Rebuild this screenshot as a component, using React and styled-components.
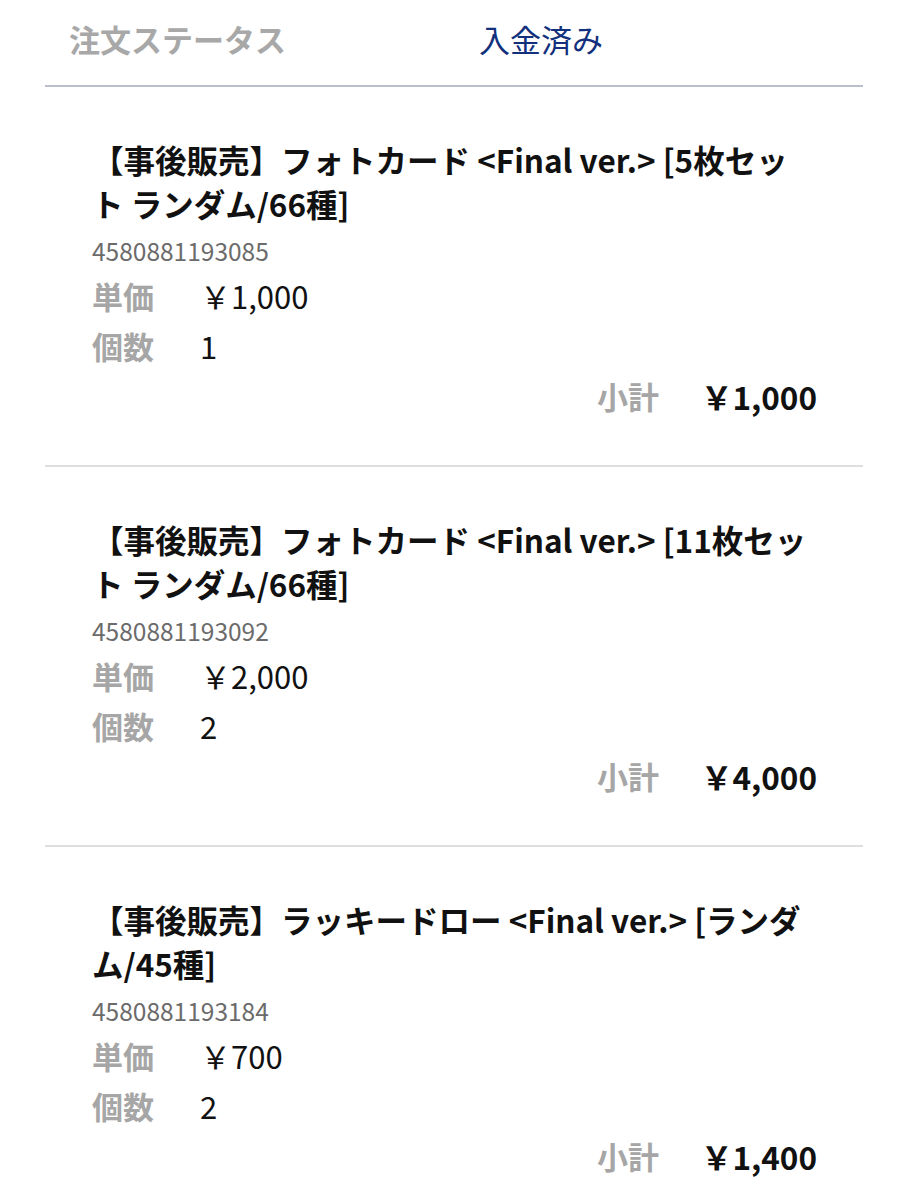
import React from "react";
import styled, { createGlobalStyle } from "styled-components";

const GlobalStyle = createGlobalStyle`
  html, body {
    margin: 0;
    padding: 0;
    background: #fff;
  }
  body {
    font-family: "Noto Sans CJK JP", "Noto Sans", sans-serif;
    color: #111;
  }
`;

const items = [
  {
    name: "【事後販売】フォトカード <Final ver.> [5枚セット ランダム/66種]",
    code: "4580881193085",
    price: "￥1,000",
    qty: "1",
    subtotal: "￥1,000",
  },
  {
    name: "【事後販売】フォトカード <Final ver.> [11枚セット ランダム/66種]",
    code: "4580881193092",
    price: "￥2,000",
    qty: "2",
    subtotal: "￥4,000",
  },
  {
    name: "【事後販売】ラッキードロー <Final ver.> [ランダム/45種]",
    code: "4580881193184",
    price: "￥700",
    qty: "2",
    subtotal: "￥1,400",
  },
];

const App = () => {
  return (
    <>
      <GlobalStyle />
      <Page>
        <StatusBar>
          <StatusLabel>注文ステータス</StatusLabel>
          <StatusValue>入金済み</StatusValue>
        </StatusBar>
        {items.map((item) => (
          <Item key={item.code}>
            <ItemName>{item.name}</ItemName>
            <ItemCode>{item.code}</ItemCode>
            <InfoRow>
              <InfoLabel>単価</InfoLabel>
              <InfoValue>{item.price}</InfoValue>
            </InfoRow>
            <InfoRow>
              <InfoLabel>個数</InfoLabel>
              <InfoValue>{item.qty}</InfoValue>
            </InfoRow>
            <Subtotal>
              <InfoLabel>小計</InfoLabel>
              <SubtotalValue>{item.subtotal}</SubtotalValue>
            </Subtotal>
          </Item>
        ))}
      </Page>
    </>
  );
};

const Page = styled.div`
  width: 818px;
  margin-left: 45px;
`;

const StatusBar = styled.div`
  display: flex;
  align-items: center;
  padding: 19px 0 26px 24px;
  border-bottom: 2px solid #b9bfcd;
  font-size: 31px;
  line-height: 40px;
`;

const StatusLabel = styled.span`
  width: 410px;
  color: #a8a8a8;
  font-weight: 700;
`;

const StatusValue = styled.span`
  color: #12307c;
  font-weight: 400;
`;

const Item = styled.div`
  padding: 50px 46px 44px 47px;
  border-bottom: 2px solid #dedede;
`;

const ItemName = styled.div`
  font-size: 31.5px;
  line-height: 44px;
  font-weight: 700;
  color: #111;
`;

const ItemCode = styled.div`
  margin: 10px 0 4px;
  font-size: 24.5px;
  line-height: 32px;
  color: #6b6b6b;
`;

const InfoRow = styled.div`
  display: grid;
  grid-template-columns: 108px 1fr;
  align-items: center;
  font-size: 31px;
  line-height: 50px;
`;

const InfoLabel = styled.span`
  color: #a6a6a6;
  font-weight: 700;
  font-size: 31px;
`;

const InfoValue = styled.span`
  color: #111;
  font-weight: 400;
`;

const Subtotal = styled.div`
  display: flex;
  justify-content: flex-end;
  align-items: center;
  gap: 42px;
  line-height: 50px;
`;

const SubtotalValue = styled.span`
  font-size: 31.5px;
  font-weight: 700;
  color: #111;
`;

export default App;
